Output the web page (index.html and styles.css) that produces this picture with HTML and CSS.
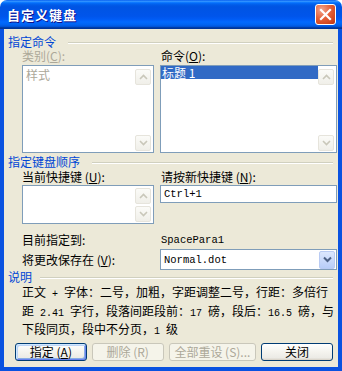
FILE: index.html
```html
<!DOCTYPE html>
<html lang="zh-CN">
<head>
<meta charset="utf-8">
<title>自定义键盘</title>
<link rel="stylesheet" href="styles.css">
</head>
<body>
<div class="window">
  <div class="titlebar">
    <span class="title">自定义键盘</span>
    <div class="close">
      <svg width="13" height="13" viewBox="0 0 13 13"><path d="M2 2 L11 11 M11 2 L2 11" stroke="#fff" stroke-width="2.2" stroke-linecap="square"/></svg>
    </div>
  </div>
  <div class="client">
    <div class="group-head head1"><span>指定命令</span><i class="rule"></i></div>
    <div class="grid g1">
      <div class="lbl disabled">类别(<u>C</u>):</div>
      <div class="lbl right">命令(<u>O</u>):</div>
      <div class="listbox tall">
        <div class="items"><div class="item gray">样式</div></div>
        <div class="sb">
          <div class="sb-btn"><svg width="9" height="6" viewBox="0 0 9 6"><path d="M1 5 L4.5 1.5 L8 5" fill="none" stroke="#C9C7BA" stroke-width="1.6"/></svg></div>
          <div class="sb-btn"><svg width="9" height="6" viewBox="0 0 9 6"><path d="M1 1 L4.5 4.5 L8 1" fill="none" stroke="#C9C7BA" stroke-width="1.6"/></svg></div>
        </div>
      </div>
      <div class="listbox tall">
        <div class="items"><div class="item sel">标题 1</div></div>
        <div class="sb">
          <div class="sb-btn"><svg width="9" height="6" viewBox="0 0 9 6"><path d="M1 5 L4.5 1.5 L8 5" fill="none" stroke="#C9C7BA" stroke-width="1.6"/></svg></div>
          <div class="sb-btn"><svg width="9" height="6" viewBox="0 0 9 6"><path d="M1 1 L4.5 4.5 L8 1" fill="none" stroke="#C9C7BA" stroke-width="1.6"/></svg></div>
        </div>
      </div>
    </div>

    <div class="group-head head2"><span>指定键盘顺序</span><i class="rule"></i></div>
    <div class="grid g2">
      <div class="lbl">当前快捷键 (<u>U</u>):</div>
      <div class="lbl right">请按新快捷键 (<u>N</u>):</div>
      <div class="listbox short">
        <div class="items"></div>
        <div class="sb sb-short">
          <div class="sb-btn"><svg width="9" height="6" viewBox="0 0 9 6"><path d="M1 5 L4.5 1.5 L8 5" fill="none" stroke="#C9C7BA" stroke-width="1.6"/></svg></div>
          <div class="sb-btn"><svg width="9" height="6" viewBox="0 0 9 6"><path d="M1 1 L4.5 4.5 L8 1" fill="none" stroke="#C9C7BA" stroke-width="1.6"/></svg></div>
        </div>
      </div>
      <div class="input mono">Ctrl+1</div>
    </div>

    <div class="grid g3">
      <div class="lbl">目前指定到:</div>
      <div class="lbl right mono">SpacePara1</div>
    </div>

    <div class="grid g4">
      <div class="lbl">将更改保存在 (<u>V</u>):</div>
      <div class="combo">
        <span class="mono">Normal.dot</span>
        <div class="dd"><svg width="9" height="7" viewBox="0 0 9 7"><path d="M1 1.5 L4.5 5 L8 1.5" fill="none" stroke="#4D6185" stroke-width="2"/></svg></div>
      </div>
    </div>

    <div class="group-head head3"><span>说明</span><i class="rule"></i></div>
    <div class="desc">正文<span class="lat"> + </span>字体：二号，加粗，字距调整二号，行距：多倍行<br>距<span class="lat"> 2.41 </span>字行，段落间距段前：<span class="lat">17 </span>磅，段后：<span class="lat">16.5 </span>磅，与<br>下段同页，段中不分页，<span class="lat">1 </span>级</div>

    <div class="buttons">
      <div class="btn default">指定 (<u>A</u>)</div>
      <div class="btn off">删除 (R)</div>
      <div class="btn off wide">全部重设 (S)...</div>
      <div class="btn">关闭</div>
    </div>
  </div>
</div>
</body>
</html>
```
FILE: styles.css
```css
html, body {
  margin: 0;
  padding: 0;
  background: #fff;
}
body {
  font-family: "Noto Sans CJK SC", "Noto Sans", sans-serif;
  font-size: 12px;
  color: #000;
}
.window {
  width: 342px;
  height: 371px;
  display: flex;
  flex-direction: column;
}
.titlebar {
  height: 29px;
  flex: none;
  border-radius: 7px 7px 0 0;
  background: linear-gradient(to bottom, #0058EE 0%, #3593FF 4%, #288EFF 6%, #127DFF 8%, #036FFC 10%, #0262EE 14%, #0057E5 20%, #0054E3 24%, #0055EB 56%, #005BF5 66%, #026AFE 76%, #0062EF 86%, #0052D6 92%, #0040AB 94%, #003092 100%);
  display: flex;
  align-items: center;
  justify-content: space-between;
  padding: 0 6px 0 7px;
}
.title {
  color: #fff;
  font-weight: bold;
  font-size: 13px;
  letter-spacing: 1px;
  line-height: 15px;
  text-shadow: 1px 1px #0F1089;
}
.close {
  width: 19px;
  height: 19px;
  border: 1px solid #fff;
  border-radius: 3px;
  background: radial-gradient(circle at 30% 25%, #F2A58F 0%, #E5613A 45%, #D1441C 80%, #B83212 100%);
  display: flex;
  align-items: center;
  justify-content: center;
  margin-top: -1px;
}
.close svg { display: block; }
.client {
  flex: 1;
  background: #ECE9D8;
  border: solid #0A52E0;
  border-width: 0 4px 4px 4px;
  padding: 6px 5px 6px 4px;
  display: flex;
  flex-direction: column;
}
.group-head {
  height: 13px;
  line-height: 13px;
  display: flex;
  color: #0046D5;
  flex: none;
}
.group-head span { white-space: nowrap; }
.rule {
  flex: 1;
  height: 1px;
  margin: 7px 0 0 12px;
  background: #D0D0BF;
  border-bottom: 1px solid #fff;
}
.head3 .rule { margin-left: 8px; }
.grid {
  display: grid;
  grid-template-columns: 132px 177px;
  column-gap: 6px;
  padding-left: 14px;
  flex: none;
}
.g1 { margin-top: 1px; grid-template-rows: 14px 88px; row-gap: 2px; }
.head2 { margin-top: 2px; }
.g2 { margin-top: 2px; grid-template-rows: 14px 39px; row-gap: 1px; }
.g3 { margin-top: 9px; grid-template-rows: 14px; }
.g4 { margin-top: 2px; grid-template-rows: 21px; }
.g4 .lbl { align-self: center; }
.lbl {
  line-height: 14px;
  height: 14px;
  white-space: nowrap;
}
.lbl.right { padding-left: 1px; }
.disabled { color: #ACA899; }
.mono {
  font-family: "Liberation Mono", "DejaVu Sans Mono", monospace;
  font-size: 10.5px;
}
.lat {
  font-family: "Liberation Mono", "DejaVu Sans Mono", monospace;
  font-size: 10px;
  white-space: pre;
}
.listbox {
  border: 1px solid #7F9DB9;
  background: #fff;
  display: flex;
  align-self: start;
}
.listbox.tall { height: 86px; }
.listbox.short { height: 37px; }
.items { flex: 1; }
.item {
  height: 13px;
  line-height: 13px;
  padding-left: 3px;
  white-space: nowrap;
}
.item.gray { color: #ACA899; margin-top: 2px; }
.item.sel { background: #316AC5; color: #fff; padding-left: 1px; }
.sb {
  width: 16px;
  margin: 3px 2px 1px 0;
  display: flex;
  flex-direction: column;
  justify-content: space-between;
}
.sb-short { margin: 2px 2px 1px 0; }
.sb-btn {
  height: 14px;
  border: 1px solid #E6E4DC;
  border-radius: 2px;
  background: linear-gradient(#FBFBF8, #F0EFE9);
  display: flex;
  align-items: center;
  justify-content: center;
}
.sb-btn svg { display: block; }
.input {
  height: 16px;
  border: 1px solid #7F9DB9;
  background: #fff;
  line-height: 16px;
  padding-left: 3px;
  align-self: start;
}
.combo {
  height: 19px;
  border: 1px solid #7F9DB9;
  background: #fff;
  display: flex;
  align-items: center;
  justify-content: space-between;
  padding-left: 3px;
}
.dd {
  width: 14px;
  height: 16px;
  margin-right: 1px;
  border: 1px solid #B9CBF3;
  border-radius: 2px;
  background: linear-gradient(#DCE7FD, #B8CDF8);
  display: flex;
  align-items: center;
  justify-content: center;
}
.dd svg { display: block; }
.desc {
  margin-top: 1px;
  padding-left: 14px;
  line-height: 15.5px;
  white-space: nowrap;
  flex: none;
}
.buttons {
  margin-top: auto;
  display: flex;
  gap: 5px;
  padding-left: 7px;
}
.btn {
  width: 70px;
  height: 16px;
  line-height: 16px;
  text-align: center;
  border: 1px solid #003C74;
  border-radius: 3px;
  background: linear-gradient(180deg, #FFFFFF 0%, #F4F3EE 50%, #ECEBE6 86%, #D6D0C5 100%);
  white-space: nowrap;
}
.btn.wide { width: 86px; }
.btn.default {
  box-shadow: inset 1px 1px #CEE7FF, inset -1px -1px #6982EE, inset 2px 2px #BCD4F6, inset -2px -2px #89ADE4;
}
.btn.off {
  border-color: #C9C7BA;
  background: #F5F4EA;
  color: #ACA899;
}
u { text-underline-offset: 1px; }
```
